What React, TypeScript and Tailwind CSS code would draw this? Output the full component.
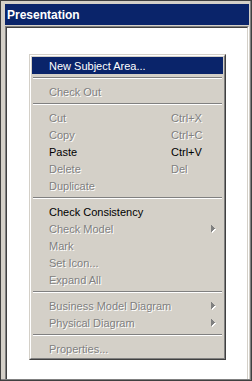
import React from "react";

type Item =
  | { sep: true }
  | {
      sep?: false;
      label: string;
      shortcut?: string;
      disabled?: boolean;
      active?: boolean;
      submenu?: boolean;
    };

const items: Item[] = [
  { label: "New Subject Area...", active: true },
  { sep: true },
  { label: "Check Out", disabled: true },
  { sep: true },
  { label: "Cut", shortcut: "Ctrl+X", disabled: true },
  { label: "Copy", shortcut: "Ctrl+C", disabled: true },
  { label: "Paste", shortcut: "Ctrl+V" },
  { label: "Delete", shortcut: "Del", disabled: true },
  { label: "Duplicate", disabled: true },
  { sep: true },
  { label: "Check Consistency" },
  { label: "Check Model", disabled: true, submenu: true },
  { label: "Mark", disabled: true },
  { label: "Set Icon...", disabled: true },
  { label: "Expand All", disabled: true },
  { sep: true },
  { label: "Business Model Diagram", disabled: true, submenu: true },
  { label: "Physical Diagram", disabled: true, submenu: true },
  { sep: true },
  { label: "Properties...", disabled: true },
];

// little submenu triangle, embossed when disabled
function Arrow({ disabled }: { disabled?: boolean }) {
  const fill = disabled ? "#808080" : "#000";
  const bars = [
    [0, 0, 7],
    [1, 1, 5],
    [2, 2, 3],
    [3, 3, 1],
  ];
  return (
    <svg width="5" height="8" viewBox="0 0 5 8" shapeRendering="crispEdges">
      {disabled &&
        bars.map(([x, y, h]) => (
          <rect key={"s" + x} x={x + 1} y={y + 1} width={1} height={h} fill="#fff" />
        ))}
      {bars.map(([x, y, h]) => (
        <rect key={x} x={x} y={y} width={1} height={h} fill={fill} />
      ))}
    </svg>
  );
}

export default function App() {
  return (
    <div
      className="w-[252px] h-[381px] border border-[#404040] bg-[#d4d0c8] overflow-hidden"
      style={{ fontFamily: '"Liberation Sans", Arial, sans-serif' }}
    >
      <div className="h-full flex flex-col border-r border-b border-[#808080] pl-[4px] pt-[3px] pr-[1px]">
        {/* Title */}
        <div className="h-[21px] shrink-0 bg-[#0a246a] flex items-center pl-[2px] text-white font-bold text-[12px]">
          Presentation
        </div>

        {/* Panel */}
        <div className="mt-[1px] flex-1 border-t border-l border-t-[#808080] border-l-[#808080] border-r border-r-white">
          <div className="relative h-full bg-white border-t border-l border-t-[#404040] border-l-[#404040] border-r border-r-[#d4d0c8]">
            {/* Context menu */}
            <div className="absolute left-[22px] top-[26px] w-[197px] border border-t-[#d4d0c8] border-l-[#d4d0c8] border-r-[#404040] border-b-[#404040]">
              <div className="bg-[#d4d0c8] border border-t-white border-l-white border-r-[#808080] border-b-[#808080] p-[1px] text-[11px]">
                {items.map((it, i) =>
                  it.sep ? (
                    <div key={i} className="h-[9px] pt-[3px] px-[1px]">
                      <div className="h-[2px] border-t border-t-[#808080] border-b border-b-white" />
                    </div>
                  ) : (
                    <div
                      key={i}
                      className={
                        "h-[17px] flex items-center pt-[1px] pl-[17px] pr-[7px] whitespace-nowrap " +
                        (it.active
                          ? "bg-[#0a246a] text-white"
                          : it.disabled
                          ? "text-[#808080] [text-shadow:1px_1px_0_#ffffff]"
                          : "text-black")
                      }
                    >
                      <span className="w-[122px] shrink-0">{it.label}</span>
                      {it.shortcut && <span>{it.shortcut}</span>}
                      {it.submenu && (
                        <span className="ml-auto flex">
                          <Arrow disabled={it.disabled} />
                        </span>
                      )}
                    </div>
                  )
                )}
              </div>
            </div>
          </div>
        </div>
      </div>
    </div>
  );
}
